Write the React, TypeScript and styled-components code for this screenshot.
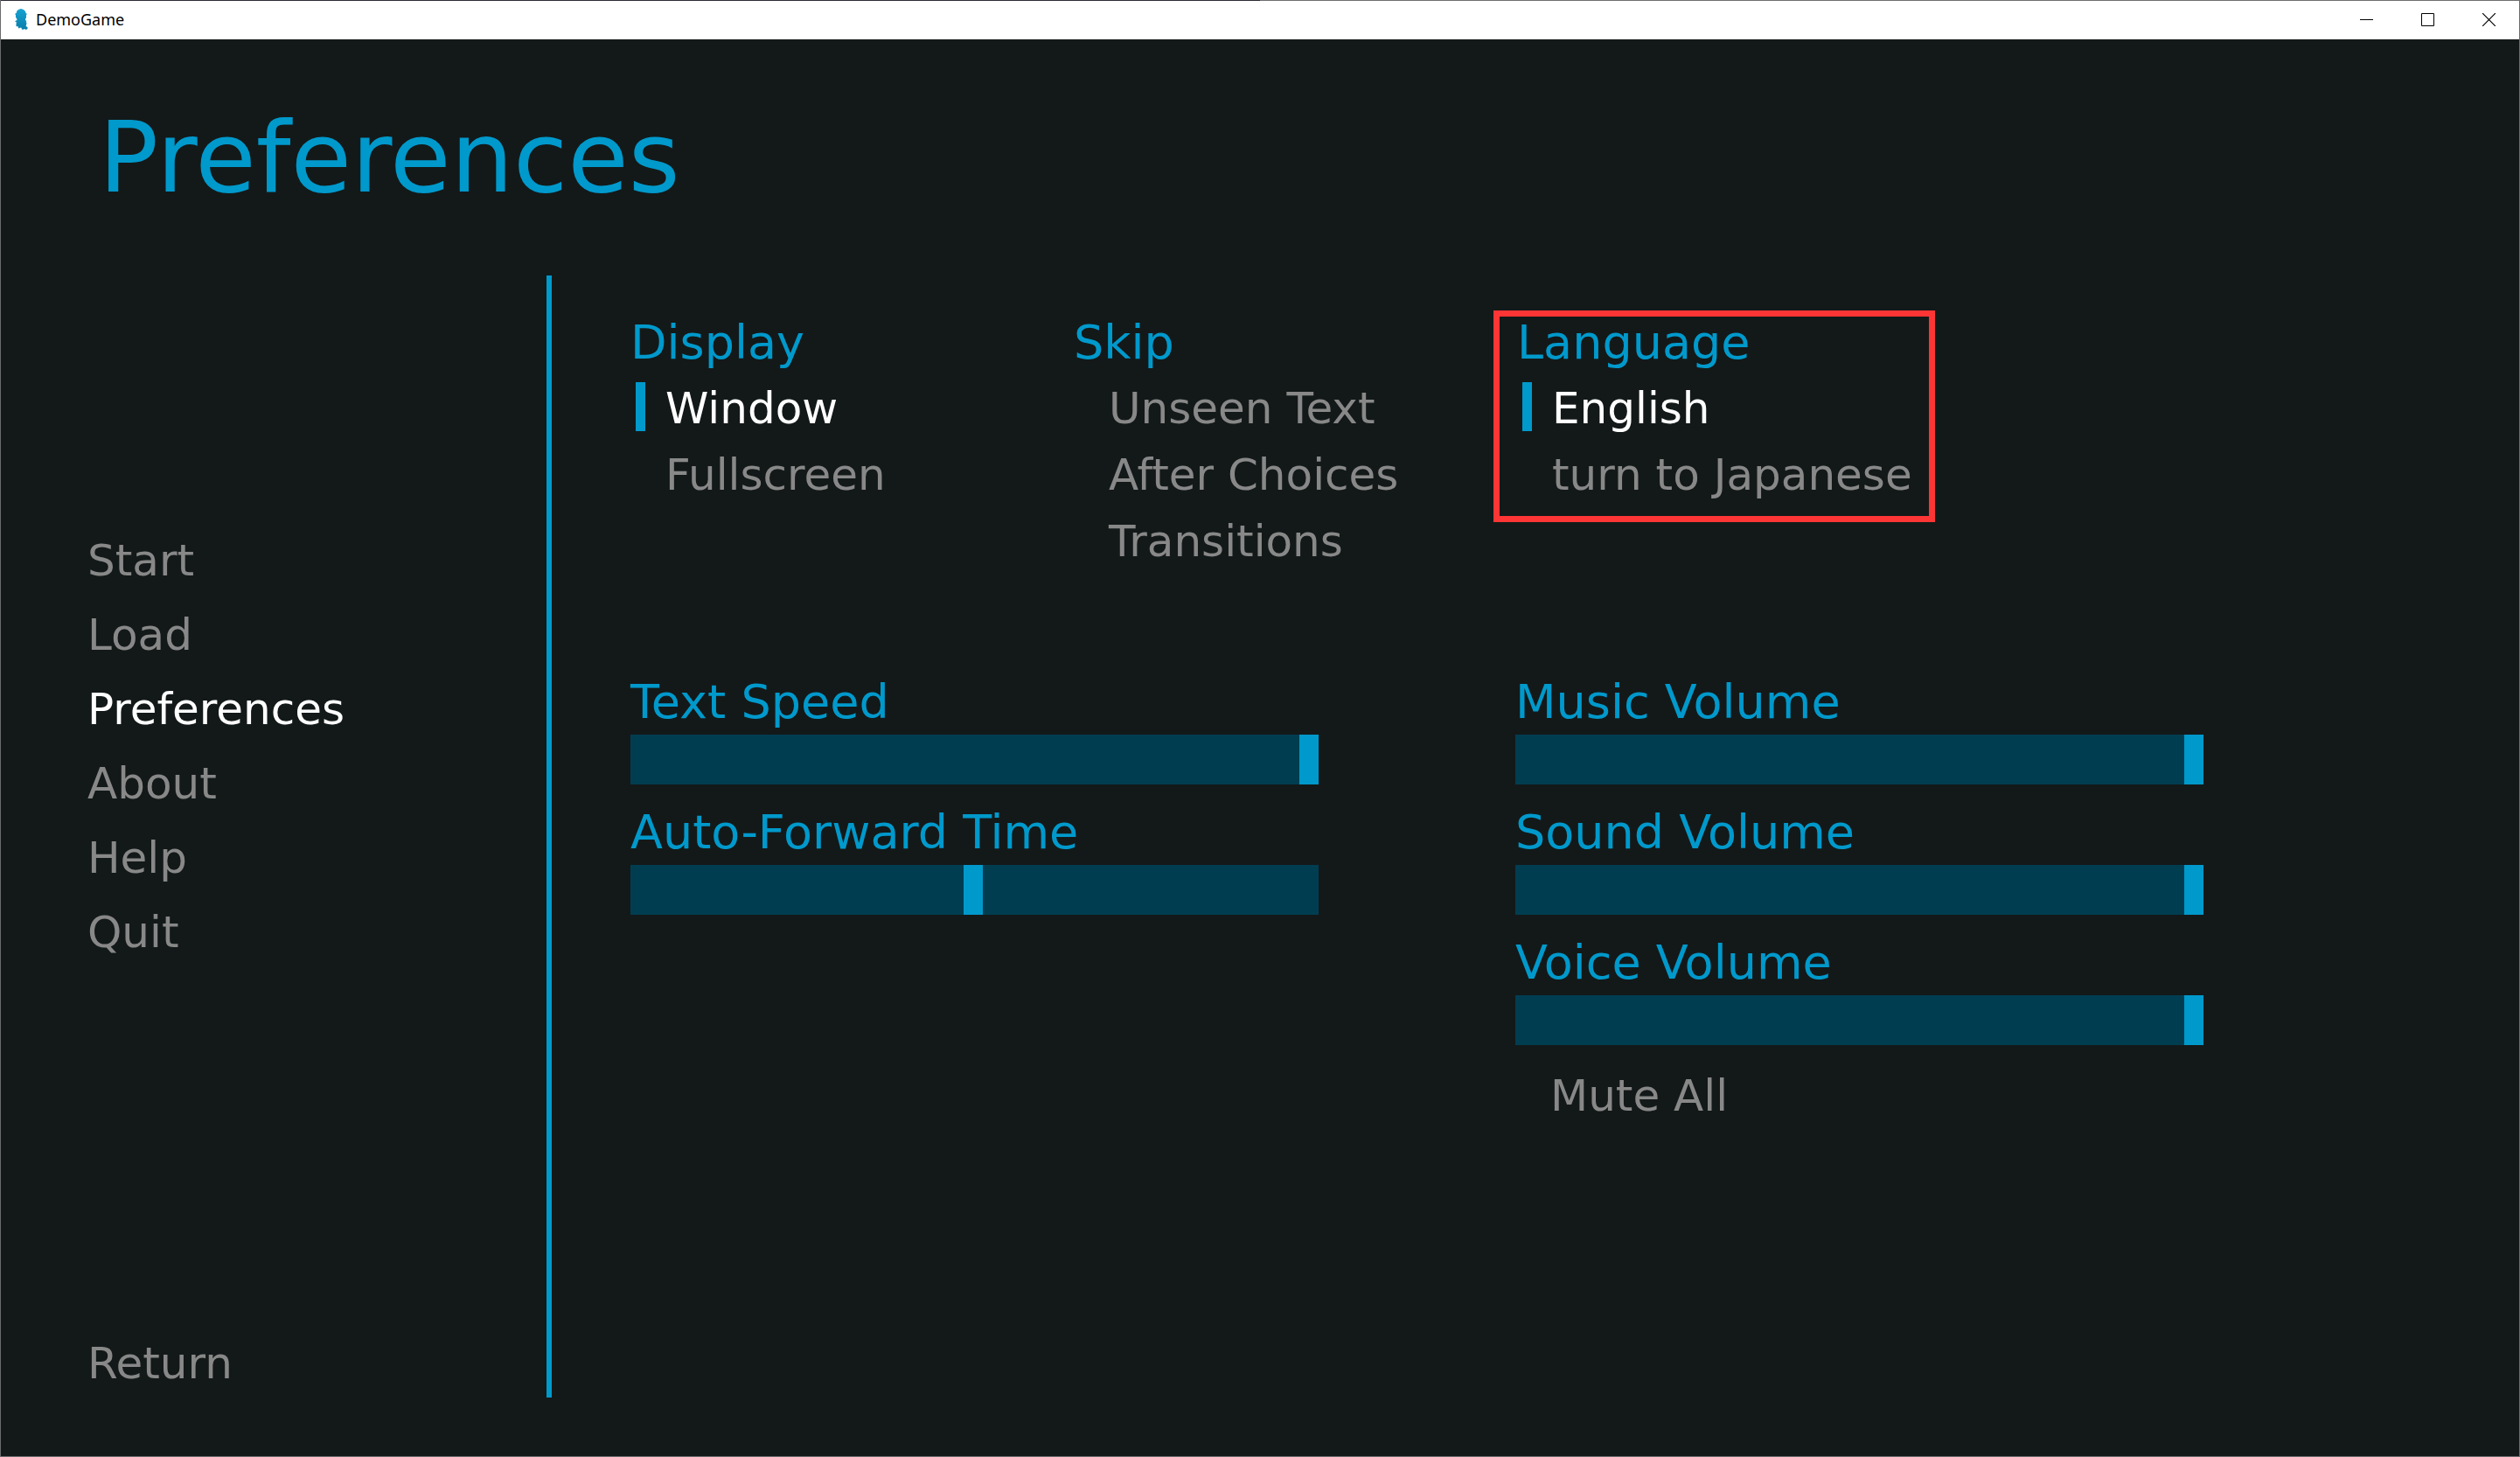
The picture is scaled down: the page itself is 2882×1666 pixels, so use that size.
import React, { useId, useState } from "react";
import styled, { createGlobalStyle } from "styled-components";

const accent = "#0099cc";
const idle = "#888888";
const trackColor = "#003d51";
const gameFont = `"DejaVu Sans", Verdana, sans-serif`;

const GlobalStyle = createGlobalStyle`
  *, *::before, *::after { box-sizing: border-box; }
  body { margin: 0; background: #131919; }
  button { margin: 0; padding: 0; border: 0; background: none; cursor: pointer; text-align: left; }
`;

const AppWindow = styled.div`
  display: flex;
  flex-direction: column;
  min-height: 100vh;
  border: 1px solid #6b6b6d;
  border-top: 0;
  background: #131919;
  font-family: ${gameFont};
`;

const TitleBar = styled.header`
  display: flex;
  align-items: center;
  gap: 1px;
  height: 45px;
  padding: 0 0 2px 14px;
  border: 0 solid;
  border-top-width: 1px;
  border-image: linear-gradient(90deg, #2b2c34 50%, #6e6e6e 50%) 1;
  background: #ffffff;
`;

const AppName = styled.span`
  flex: 1;
  padding-left: 7px;
  color: #000000;
  font: 18px/24px "Noto Sans", "Open Sans", sans-serif;
`;

const WindowButton = styled.button`
  display: flex;
  align-items: center;
  align-self: flex-start;
  justify-content: center;
  width: 69px;
  height: 43px;
`;

const Screen = styled.main`
  display: flex;
  flex-direction: column;
  flex: 1;
`;

const ScreenTitle = styled.h1`
  margin: 0;
  padding: 70px 0 70px 112px;
  color: ${accent};
  font-size: 113px;
  line-height: 130px;
  font-weight: 400;
`;

const Columns = styled.div`
  display: flex;
  flex: 1;
  padding-bottom: 67px;
`;

const Sidebar = styled.nav`
  display: flex;
  flex-direction: column;
  justify-content: space-between;
  width: 630px;
  padding: 296px 0 9px 99px;
  border-right: 6px solid ${accent};
`;

const NavList = styled.div`
  display: flex;
  flex-direction: column;
  align-items: flex-start;
  gap: 25px;
`;

const NavButton = styled.button<{ $current?: boolean }>`
  color: ${(p) => (p.$current ? "#ffffff" : idle)};
  font-family: inherit;
  font-size: 50px;
  line-height: 60px;
`;

const Content = styled.div`
  flex: 1;
  padding: 37px 0 0 90px;
`;

const ChoiceRow = styled.div`
  display: grid;
  grid-template-columns: 507px 507px 1fr;
  align-items: start;
`;

const Group = styled.fieldset`
  min-width: 0;
  margin: 0;
  padding: 0;
  border: 0;
`;

const Highlight = styled.div`
  width: 505px;
  height: 242px;
  margin: 3px 0 0 -27px;
  padding: 0 0 0 20px;
  border: 7px solid #fe3535;

  & > fieldset {
    margin-top: -10px;
  }
`;

const labelText = `
  display: block;
  padding: 0;
  color: ${accent};
  font-size: 54px;
  line-height: 80px;
`;

const GroupLabel = styled.legend`
  ${labelText}
`;

const SliderLabel = styled.label`
  ${labelText}
  height: 77px;
`;

const OptionList = styled.div`
  display: flex;
  flex-direction: column;
  align-items: flex-start;
  gap: 16px;
  padding: 5px 0 0 6px;
`;

const Option = styled.label`
  display: flex;
  align-items: flex-start;
  gap: 23px;
  color: ${idle};
  font-size: 50px;
  line-height: 60px;
  white-space: nowrap;
  cursor: pointer;

  &:has(input:checked) {
    color: #ffffff;
  }
`;

const Mark = styled.input`
  appearance: none;
  flex: none;
  width: 11px;
  height: 56px;
  margin: 0;

  &:checked {
    background: ${accent};
  }
`;

const SliderRow = styled.div`
  display: grid;
  grid-template-columns: 787px 787px;
  column-gap: 225px;
  align-items: start;
  padding-top: 114px;
`;

const SliderColumn = styled.div`
  display: flex;
  flex-direction: column;
  gap: 15px;
`;

const MuteRow = styled.div`
  padding: 13px 0 0 6px;
`;

const Track = styled.input`
  appearance: none;
  display: block;
  width: 100%;
  height: 57px;
  margin: 0;
  background: ${trackColor};

  &::-webkit-slider-thumb {
    appearance: none;
    width: 22px;
    height: 57px;
    background: ${accent};
  }

  &::-moz-range-thumb {
    width: 22px;
    height: 57px;
    border: 0;
    border-radius: 0;
    background: ${accent};
  }
`;

function Radios({ label, options }: { label: string; options: string[] }) {
  const name = useId();
  return (
    <Group>
      <GroupLabel>{label}</GroupLabel>
      <OptionList>
        {options.map((option, i) => (
          <Option key={option}>
            <Mark type="radio" name={name} defaultChecked={i === 0} />
            {option}
          </Option>
        ))}
      </OptionList>
    </Group>
  );
}

function Checks({ label, options }: { label: string; options: string[] }) {
  return (
    <Group>
      <GroupLabel>{label}</GroupLabel>
      <OptionList>
        {options.map((option) => (
          <Option key={option}>
            <Mark type="checkbox" />
            {option}
          </Option>
        ))}
      </OptionList>
    </Group>
  );
}

function Slider({ label, value }: { label: string; value: number }) {
  const id = useId();
  return (
    <div>
      <SliderLabel htmlFor={id}>{label}</SliderLabel>
      <Track id={id} type="range" min={0} max={1000} defaultValue={value} />
    </div>
  );
}

const pages = ["Start", "Load", "Preferences", "About", "Help", "Quit"];

export default function App() {
  const [page, setPage] = useState("Preferences");
  return (
    <AppWindow>
      <GlobalStyle />
      <TitleBar>
        <svg width="18" height="26" viewBox="0 0 18 26" aria-hidden="true">
          <defs>
            <linearGradient id="figure" x1="0" y1="0" x2="0" y2="1">
              <stop offset="0" stopColor="#17a2d2" />
              <stop offset="1" stopColor="#087daa" />
            </linearGradient>
          </defs>
          <path
            fill="url(#figure)"
            d="M6 2 9 1 12 2 14 4 14.500 6 16 7 15 8 15 11 14 13 14 14 15.500 15 14.500 16 15.500 17 15 20 14.500 21 16.500 22 16.500 24 14.500 25 13 24 11 25 9.500 24 10 23 8 22.500 7 23.500 6 23 6 21.500 3.500 21 3.500 18 4 16.500 2.500 16 2.500 15 4.500 14 4 12 3 11 3 8 2 7 4 5.500 4 4Z"
          />
        </svg>
        <AppName>DemoGame</AppName>
        <WindowButton aria-label="Minimize">
          <svg width="15" height="15" viewBox="0 0 15 15" stroke="#000" fill="none">
            <path d="M0 7.500H15" />
          </svg>
        </WindowButton>
        <WindowButton aria-label="Maximize">
          <svg width="15" height="15" viewBox="0 0 15 15" stroke="#000" fill="none">
            <path d="M.5.5h14v14H.5z" />
          </svg>
        </WindowButton>
        <WindowButton aria-label="Close">
          <svg width="15" height="15" viewBox="0 0 15 15" stroke="#000" strokeWidth="1.200" fill="none">
            <path d="M0 0 15 15M15 0 0 15" />
          </svg>
        </WindowButton>
      </TitleBar>
      <Screen>
        <ScreenTitle>Preferences</ScreenTitle>
        <Columns>
          <Sidebar>
            <NavList>
              {pages.map((name) => (
                <NavButton key={name} $current={name === page} onClick={() => setPage(name)}>
                  {name}
                </NavButton>
              ))}
            </NavList>
            <NavButton>Return</NavButton>
          </Sidebar>
          <Content>
            <ChoiceRow>
              <Radios label="Display" options={["Window", "Fullscreen"]} />
              <Checks label="Skip" options={["Unseen Text", "After Choices", "Transitions"]} />
              <Highlight>
                <Radios label="Language" options={["English", "turn to Japanese"]} />
              </Highlight>
            </ChoiceRow>
            <SliderRow>
              <SliderColumn>
                <Slider label="Text Speed" value={1000} />
                <Slider label="Auto-Forward Time" value={498} />
              </SliderColumn>
              <SliderColumn>
                <Slider label="Music Volume" value={1000} />
                <Slider label="Sound Volume" value={1000} />
                <Slider label="Voice Volume" value={1000} />
                <MuteRow>
                  <Option>
                    <Mark type="checkbox" />
                    Mute All
                  </Option>
                </MuteRow>
              </SliderColumn>
            </SliderRow>
          </Content>
        </Columns>
      </Screen>
    </AppWindow>
  );
}
